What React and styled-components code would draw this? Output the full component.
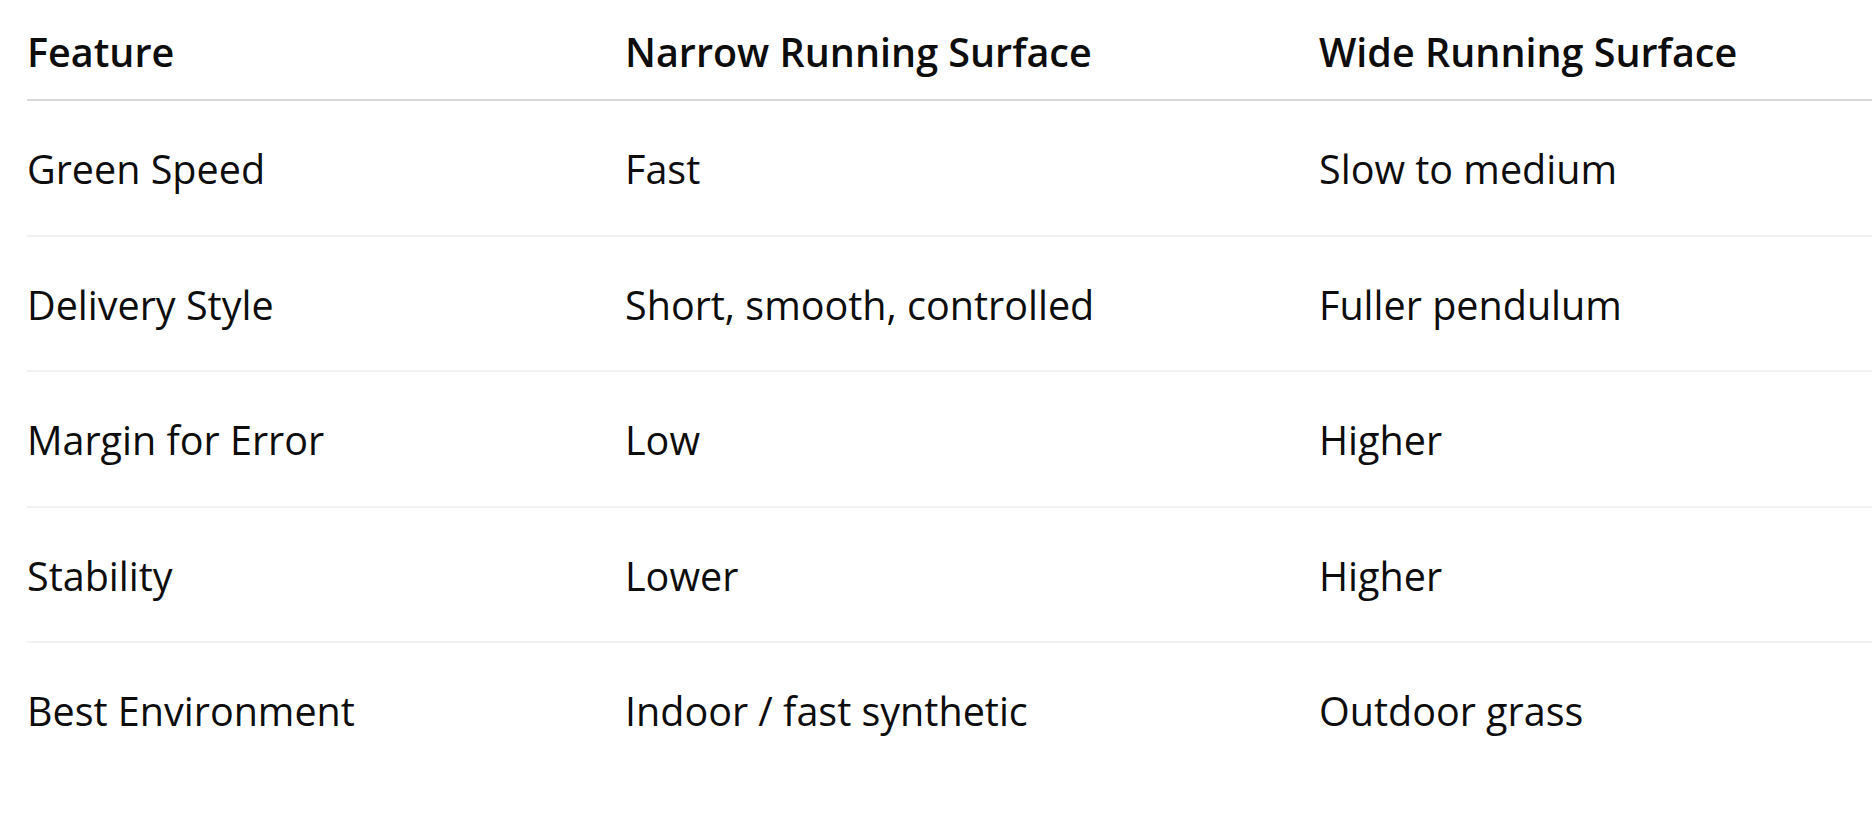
import styled, { createGlobalStyle } from "styled-components";

const GlobalStyle = createGlobalStyle`
  html, body {
    margin: 0;
    padding: 0;
    background: #ffffff;
  }
  body {
    font-family: "Open Sans", "Noto Sans", "Liberation Sans", sans-serif;
    color: #0d0d0d;
  }
`;

const Page = styled.div`
  width: 1872px;
  height: 819px;
  overflow: hidden;
  padding-left: 27px;
  box-sizing: border-box;
`;

const Table = styled.table`
  width: 1900px;
  border-collapse: collapse;
  table-layout: fixed;
  font-size: 39.5px;
  line-height: 60px;
`;

const HeadCell = styled.th`
  text-align: left;
  font-weight: 600;
  padding: 22px 0 17px;
  border-bottom: 2px solid #d9d9d9;
  width: ${(p) => p.$width || "auto"};
`;

const Row = styled.tr`
  border-bottom: 2px solid ${(p) => (p.$last ? "transparent" : "#f1f1f1")};
`;

const Cell = styled.td`
  padding: 38px 0 35.5px;
  font-weight: 400;
  white-space: nowrap;
`;

const columns = [
  { label: "Feature", width: "598px" },
  { label: "Narrow Running Surface", width: "694px" },
  { label: "Wide Running Surface", width: "auto" },
];

const rows = [
  ["Green Speed", "Fast", "Slow to medium"],
  ["Delivery Style", "Short, smooth, controlled", "Fuller pendulum"],
  ["Margin for Error", "Low", "Higher"],
  ["Stability", "Lower", "Higher"],
  ["Best Environment", "Indoor / fast synthetic", "Outdoor grass"],
];

export default function App() {
  return (
    <>
      <GlobalStyle />
      <Page>
        <Table>
          <thead>
            <tr>
              {columns.map((c) => (
                <HeadCell key={c.label} $width={c.width}>
                  {c.label}
                </HeadCell>
              ))}
            </tr>
          </thead>
          <tbody>
            {rows.map((r, i) => (
              <Row key={r[0]} $last={i === rows.length - 1}>
                {r.map((v) => (
                  <Cell key={v}>{v}</Cell>
                ))}
              </Row>
            ))}
          </tbody>
        </Table>
      </Page>
    </>
  );
}
